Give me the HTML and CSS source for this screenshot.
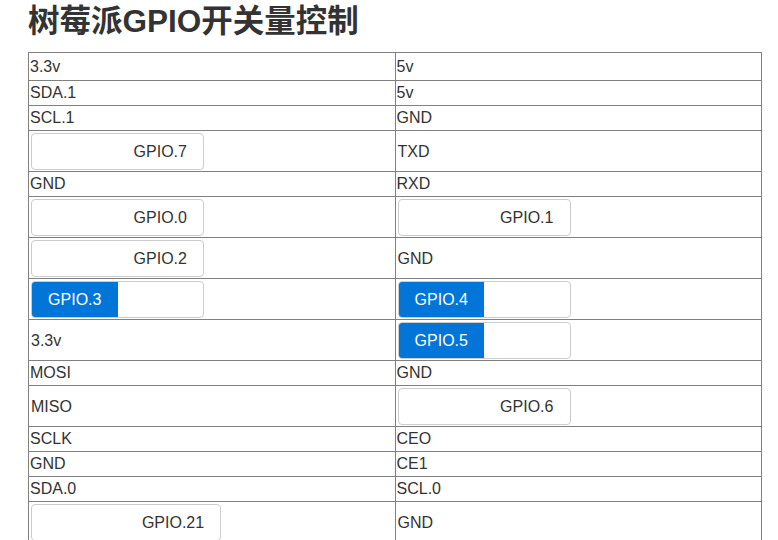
FILE: index.html
```html
<!DOCTYPE html>
<html lang="zh-CN">
<head>
<meta charset="utf-8">
<title>树莓派GPIO开关量控制</title>
<link rel="stylesheet" href="styles.css">
</head>
<body>
<h2 class="title">树莓派GPIO开关量控制</h2>
<table class="pins">
  <tr class="first"><td>3.3v</td><td>5v</td></tr>
  <tr><td>SDA.1</td><td>5v</td></tr>
  <tr><td>SCL.1</td><td>GND</td></tr>
  <tr class="btn-row">
    <td><span class="switch"><span class="sw-handle"></span><span class="sw-label">GPIO.7</span></span></td>
    <td>TXD</td>
  </tr>
  <tr><td>GND</td><td>RXD</td></tr>
  <tr class="btn-row">
    <td><span class="switch"><span class="sw-handle"></span><span class="sw-label">GPIO.0</span></span></td>
    <td><span class="switch"><span class="sw-handle"></span><span class="sw-label">GPIO.1</span></span></td>
  </tr>
  <tr class="btn-row">
    <td><span class="switch"><span class="sw-handle"></span><span class="sw-label">GPIO.2</span></span></td>
    <td>GND</td>
  </tr>
  <tr class="btn-row">
    <td><span class="switch"><span class="sw-on">GPIO.3</span><span class="sw-handle"></span></span></td>
    <td><span class="switch"><span class="sw-on">GPIO.4</span><span class="sw-handle"></span></span></td>
  </tr>
  <tr class="btn-row">
    <td>3.3v</td>
    <td><span class="switch"><span class="sw-on">GPIO.5</span><span class="sw-handle"></span></span></td>
  </tr>
  <tr><td>MOSI</td><td>GND</td></tr>
  <tr class="btn-row">
    <td>MISO</td>
    <td><span class="switch"><span class="sw-handle"></span><span class="sw-label">GPIO.6</span></span></td>
  </tr>
  <tr><td>SCLK</td><td>CEO</td></tr>
  <tr><td>GND</td><td>CE1</td></tr>
  <tr><td>SDA.0</td><td>SCL.0</td></tr>
  <tr class="btn-row">
    <td><span class="switch wide"><span class="sw-handle"></span><span class="sw-label">GPIO.21</span></span></td>
    <td>GND</td>
  </tr>
</table>
</body>
</html>
```

FILE: styles.css
```css
html, body {
  margin: 0;
  padding: 0;
  background: #ffffff;
}

body {
  padding: 0 16px 0 28px;
  font-family: "Liberation Sans", Arial, "Noto Sans CJK SC", sans-serif;
  font-size: 16px;
  color: #333333;
}

.title {
  margin: 5px 0 14px;
  font-family: "Liberation Sans", Arial, "Noto Sans CJK SC", sans-serif;
  font-size: 31.5px;
  line-height: 33px;
  font-weight: bold;
  color: #333333;
}

.pins {
  width: 734px;
  border-collapse: collapse;
  table-layout: fixed;
}

.pins td {
  width: 50%;
  border: 1px solid #808080;
  padding: 0 1px;
  height: 24px;
  line-height: 24px;
  vertical-align: middle;
  white-space: nowrap;
}

.pins tr.first td {
  height: 27px;
}

.pins tr.btn-row td {
  height: 38px;
  padding: 2px 2px 0;
}

.switch {
  display: flex;
  box-sizing: border-box;
  width: 173px;
  height: 37px;
  border: 1px solid #cccccc;
  border-radius: 4px;
  overflow: hidden;
  background: #ffffff;
  margin-top: -1px;
}

.switch.wide {
  width: 190px;
}

.sw-handle,
.sw-label,
.sw-on {
  flex: 1 1 0;
  line-height: 35px;
  text-align: center;
  font-size: 16px;
}

.sw-label {
  color: #333333;
}

.sw-on {
  background: #0275d8;
  color: #ffffff;
}
```
